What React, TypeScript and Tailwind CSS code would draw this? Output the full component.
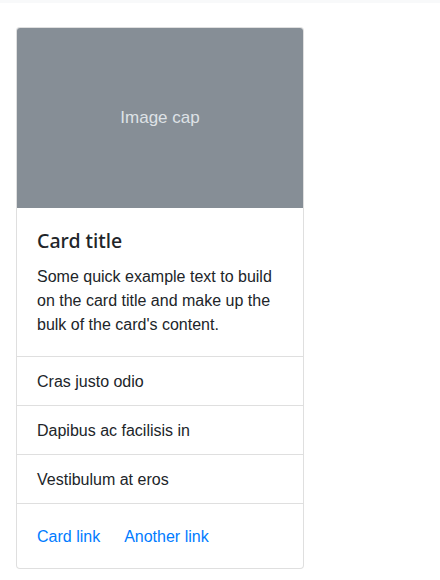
export default function App() {
  const items = ["Cras justo odio", "Dapibus ac facilisis in", "Vestibulum at eros"];

  return (
    <div className="min-h-[580px] bg-white text-[#212529]" style={{ fontFamily: '"Liberation Sans", Arial, sans-serif' }}>
      <div className="h-[3px] bg-[#f8f9fa]" />
      <div className="px-4 pt-6">
        <div className="w-[288px] overflow-hidden rounded border border-black/[0.125] bg-white">
          <div className="flex h-[180px] items-center justify-center bg-[#868e96] text-[17px] text-[#dee2e6]">
            Image cap
          </div>
          <div className="px-5 pb-[19px] pt-[21px]">
            <h5 className="mb-3 font-['Noto_Sans',sans-serif] text-[19.5px] font-medium leading-6">Card title</h5>
            <p className="text-base leading-6">
              Some quick example text to build on the card title and make up the bulk of the card's content.
            </p>
          </div>
          <ul className="border-t border-black/[0.125]">
            {items.map((item) => (
              <li key={item} className="border-b border-black/[0.125] px-5 pb-[11px] pt-[13px] text-base leading-6">
                {item}
              </li>
            ))}
          </ul>
          <div className="flex gap-6 px-5 pb-[19px] pt-[21px] text-base leading-6 text-[#007bff]">
            <a href="#">Card link</a>
            <a href="#">Another link</a>
          </div>
        </div>
      </div>
    </div>
  );
}
